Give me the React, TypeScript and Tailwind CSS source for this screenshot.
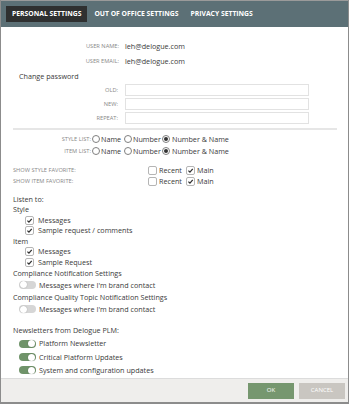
import React from "react";

const font = { fontFamily: '"Open Sans", "Liberation Sans", sans-serif' };

function Check({ checked }: { checked: boolean }) {
  return (
    <span className="w-[9px] h-[9px] border border-[#b5b5b5] rounded-[2px] bg-white flex items-center justify-center shrink-0">
      {checked && (
        <svg width="7" height="7" viewBox="0 0 10 10">
          <path d="M2 5.2 L4.2 7.4 L8.2 2.6" stroke="#333" strokeWidth="1.8" fill="none" />
        </svg>
      )}
    </span>
  );
}

function Radio({ on }: { on: boolean }) {
  return (
    <span className="w-[8px] h-[8px] rounded-full border border-[#808080] bg-white flex items-center justify-center shrink-0">
      {on && <span className="w-[4px] h-[4px] rounded-full bg-[#333]" />}
    </span>
  );
}

function Toggle({ on }: { on: boolean }) {
  return (
    <span
      className={
        "w-[17px] h-[8px] rounded-full flex items-center px-[1px] shrink-0 " +
        (on ? "bg-[#6f9369] justify-end" : "bg-[#d6d6d6] justify-start")
      }
    >
      <span className="w-[7px] h-[7px] rounded-full bg-white shadow-[0_0_1px_rgba(0,0,0,0.4)]" />
    </span>
  );
}

function ListRow({ label }: { label: string }) {
  return (
    <div className="h-[12px] flex items-center">
      <span className="w-[79px] text-right text-[5.7px] text-[#888] pr-[1px]">{label}</span>
      <Radio on={false} />
      <span className="ml-[1px] w-[23px]">Name</span>
      <Radio on={false} />
      <span className="ml-[1px] w-[29px]">Number</span>
      <Radio on={true} />
      <span className="ml-[2px]">Number &amp; Name</span>
    </div>
  );
}

function FavRow({ label }: { label: string }) {
  return (
    <div className="h-[11px] flex items-center">
      <span className="w-[135px] text-[5.7px] text-[#888]">{label}</span>
      <Check checked={false} />
      <span className="ml-[2px] w-[27px]">Recent</span>
      <Check checked={true} />
      <span className="ml-[2px]">Main</span>
    </div>
  );
}

function CheckItem({ text }: { text: string }) {
  return (
    <div className="h-[10.5px] flex items-center pl-[12px] gap-[4px]">
      <Check checked={true} />
      <span>{text}</span>
    </div>
  );
}

function ToggleItem({ text, on }: { text: string; on: boolean }) {
  return (
    <div className="flex items-center pl-[6px] gap-[3px]">
      <Toggle on={on} />
      <span>{text}</span>
    </div>
  );
}

function PasswordRow({ label }: { label: string }) {
  return (
    <div className="h-[14px] flex items-center">
      <span className="w-[112px] text-right text-[5.7px] text-[#888] pr-[7px]">{label}</span>
      <div className="w-[184px] h-[12px] border border-[#e2e2e2] bg-white" />
    </div>
  );
}

export default function App() {
  return (
    <div
      style={font}
      className="w-[349px] h-[404px] flex flex-col bg-white border-l border-r border-[#8c8c8c] text-[7.2px] text-[#3a3a3a] overflow-hidden"
    >
      {/* tabs */}
      <div className="h-[27px] shrink-0 bg-[#5c7076] border-t border-[#9a9a9a] flex items-center pl-[5px]">
        <div className="h-[16px] bg-[#2f3030] px-[6px] flex items-center text-white font-bold text-[6.8px]">
          PERSONAL SETTINGS
        </div>
        <div className="ml-[7px] text-white font-bold text-[6.8px]">OUT OF OFFICE SETTINGS</div>
        <div className="ml-[12px] text-white font-bold text-[6.8px]">PRIVACY SETTINGS</div>
      </div>

      {/* content */}
      <div className="flex-1 pl-[12px] pr-[10px] pt-[12px]">
        <div className="h-[15px] flex items-center">
          <span className="w-[112px] text-right text-[5.7px] text-[#888] pr-[6px]">USER NAME:</span>
          <span>leh@delogue.com</span>
        </div>
        <div className="h-[15px] flex items-center">
          <span className="w-[112px] text-right text-[5.7px] text-[#888] pr-[6px]">USER EMAIL:</span>
          <span>leh@delogue.com</span>
        </div>
        <div className="h-[14px] flex items-center pl-[6px]">Change password</div>
        <PasswordRow label="OLD:" />
        <PasswordRow label="NEW:" />
        <PasswordRow label="REPEAT:" />
        <div className="mt-[3px] h-[2px] w-[324px] bg-[#e6e6e6]" />
        <div className="pt-[3px]">
          <ListRow label="STYLE LIST:" />
          <ListRow label="ITEM LIST:" />
        </div>
        <div className="pt-[8px]">
          <FavRow label="SHOW STYLE FAVORITE:" />
          <FavRow label="SHOW ITEM FAVORITE:" />
        </div>
        <div className="pt-[7px]">
          <div className="h-[10.5px] flex items-center">Listen to:</div>
          <div className="h-[10.5px] flex items-center">Style</div>
          <CheckItem text="Messages" />
          <CheckItem text="Sample request / comments" />
          <div className="h-[10.5px] flex items-center">Item</div>
          <CheckItem text="Messages" />
          <CheckItem text="Sample Request" />
          <div className="h-[11.5px] flex items-center">Compliance Notification Settings</div>
          <div className="h-[12px] flex items-center">
            <ToggleItem text="Messages where I'm brand contact" on={false} />
          </div>
          <div className="h-[13px] flex items-end pb-[1px]">Compliance Quality Topic Notification Settings</div>
          <div className="h-[11px] flex items-center">
            <ToggleItem text="Messages where I'm brand contact" on={false} />
          </div>
          <div className="h-[21px] flex items-end">Newsletters from Delogue PLM:</div>
          <div className="h-[13.5px] flex items-center mt-[1px]">
            <ToggleItem text="Platform Newsletter" on={true} />
          </div>
          <div className="h-[13.5px] flex items-center">
            <ToggleItem text="Critical Platform Updates" on={true} />
          </div>
          <div className="h-[13px] flex items-center">
            <ToggleItem text="System and configuration updates" on={true} />
          </div>
        </div>
      </div>

      {/* footer */}
      <div className="h-[26px] shrink-0 bg-[#efeeec] border-t border-[#dcdcdc] border-b-2 border-b-[#8c8c8c] flex items-center justify-end pr-[3px] gap-[5px]">
        <button className="w-[46px] h-[16px] bg-[#76976f] text-white text-[6px]">OK</button>
        <button className="w-[46px] h-[16px] bg-[#c9c6c1] text-white text-[6px]">CANCEL</button>
      </div>
    </div>
  );
}
